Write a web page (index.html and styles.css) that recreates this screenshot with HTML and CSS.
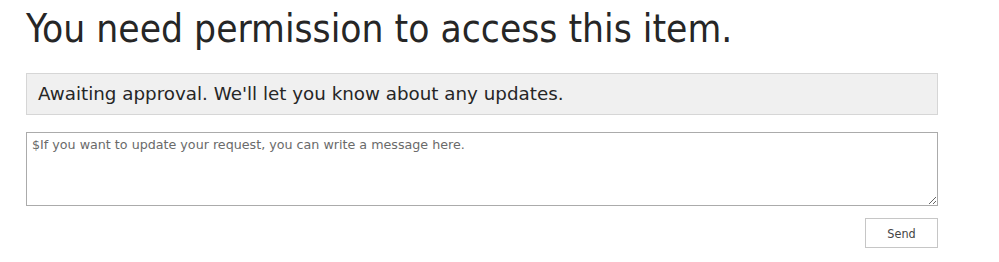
FILE: index.html
```html
<!DOCTYPE html>
<html lang="en">
<head>
<meta charset="UTF-8">
<title>Access required</title>
<link rel="stylesheet" href="styles.css">
</head>
<body>
<div class="page">
    <h1 class="title">You need permission to access this item.</h1>

    <div class="status">Awaiting approval. We'll let you know about any updates.</div>

    <textarea class="message" placeholder="$If you want to update your request, you can write a message here."></textarea>

    <div class="actions">
        <button class="send-btn">Send</button>
    </div>
</div>
</body>
</html>
```

FILE: styles.css
```css
body {
    margin: 0;
    background: #fff;
    font-family: Verdana, "DejaVu Sans", sans-serif;
    color: #262626;
}
.page {
    width: 912px;
    padding: 6px 0 0 26px;
}
.title {
    margin: 0;
    font-family: "Segoe UI", Tahoma, "DejaVu Sans Condensed", sans-serif;
    font-size: 38.6px;
    font-weight: normal;
    line-height: 46px;
    color: #262626;
}
.status {
    margin-top: 21px;
    height: 40px;
    line-height: 40px;
    padding: 0 11px;
    background: #f0f0f0;
    border: 1px solid #d6d6d6;
    font-size: 18.3px;
    color: #262626;
}
.message {
    display: block;
    box-sizing: border-box;
    width: 912px;
    height: 74px;
    margin-top: 17px;
    padding: 4px 5px;
    border: 1px solid #ababab;
    border-radius: 0;
    font-family: inherit;
    font-size: 12.7px;
    color: #444;
    resize: vertical;
}
.message::placeholder {
    color: #6a6a6a;
}
.actions {
    display: flex;
    justify-content: flex-end;
    margin-top: 12px;
}
.send-btn {
    width: 73px;
    height: 30px;
    background: #fff;
    border: 1px solid #c6c6c6;
    font-family: "DejaVu Sans Condensed", sans-serif;
    font-size: 12.5px;
    color: #444;
}
```
